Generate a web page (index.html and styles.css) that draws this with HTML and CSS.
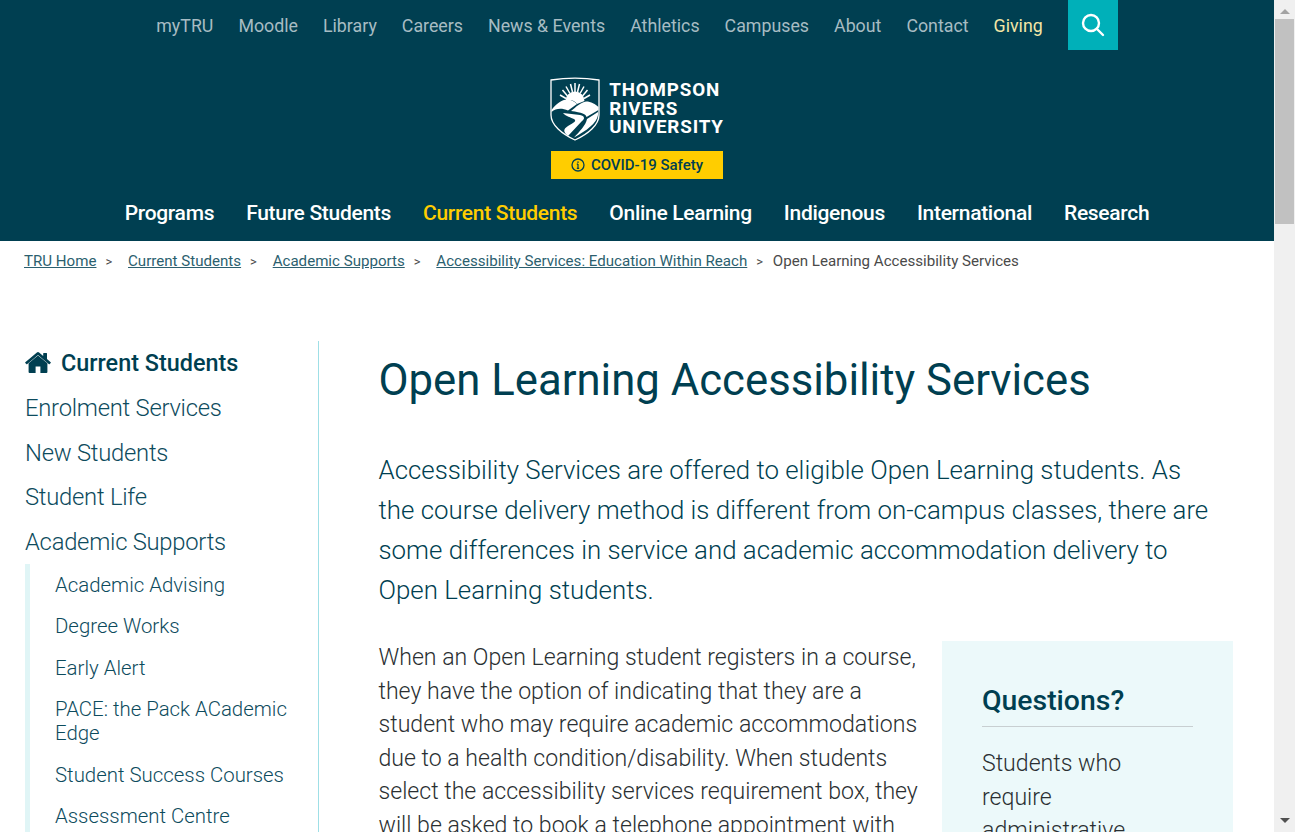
FILE: index.html
```html
<!DOCTYPE html>
<html lang="en">
<head>
<meta charset="UTF-8">
<meta name="viewport" content="width=device-width, initial-scale=1.0">
<title>Open Learning Accessibility Services</title>
<link rel="stylesheet" href="styles.css">
</head>
<body>
<div class="page">
    <header class="header">
        <nav class="top-nav">
            <a href="#">myTRU</a>
            <a href="#">Moodle</a>
            <a href="#">Library</a>
            <a href="#">Careers</a>
            <a href="#">News &amp; Events</a>
            <a href="#">Athletics</a>
            <a href="#">Campuses</a>
            <a href="#">About</a>
            <a href="#">Contact</a>
            <a href="#" class="giving">Giving</a>
            <a href="#" class="search-btn" aria-label="Search">
                <svg width="24" height="24" viewBox="0 0 24 24" fill="none" stroke="#fff" stroke-width="2.4" stroke-linecap="round"><circle cx="10" cy="10" r="8"/><path d="M16 16l6 6"/></svg>
            </a>
        </nav>
        <div class="logo">
            <svg class="shield" width="50" height="64" viewBox="0 0 50 64">
                <path d="M1 3C16 .6 34 .6 49 3V38C49 48 38 57 25 63C12 57 1 48 1 38Z" fill="none" stroke="#fff" stroke-width="1.300"/>
                <path d="M25 6v9M20.500 7l2 8M29.500 7l-2 8M16 9.500l4 7M34 9.500l-4 7M12.500 13l5 6M37.500 13l-5 6M10 18l6 3.500M40 18l-6 3.500" stroke="#fff" stroke-width="1.500"/>
                <path d="M15.500 24A9.500 9.500 0 0 1 34.500 24L27 27C24 23 20 22 15.500 24Z" fill="#fff"/>
                <path d="M1.500 33C6 27 12 22.500 17 22.500C21 22.500 24.500 24.500 27 27L18 33.500C12 31 6 31 1.500 35Z" fill="#fff"/>
                <path d="M21 34C26 30 31 25 36 24.500C41 24.500 45.500 27 48.500 30V33L36.500 40C36 37 32 35.500 21 34Z" fill="#fff"/>
                <path d="M13 36L30 38C35 39 35 42 32 44L18 59C13 55 13 52 18 49C24 45.500 27 44 24 42C21 40.500 16 39.500 13 36Z" fill="#fff"/>
                <path d="M37 42L48 35V38C47 46 36 54 24 60.500C29 55 36 48 37 42Z" fill="#fff"/>
            </svg>
            <div class="wordmark">THOMPSON<br>RIVERS<br>UNIVERSITY</div>
        </div>
        <a href="#" class="covid">
            <svg width="14" height="14" viewBox="0 0 14 14" fill="none" stroke="#003f51"><circle cx="7" cy="7" r="6" stroke-width="1.300"/><path d="M7 6v4.200M5.800 10.300h2.400M5.800 6.200H7" stroke-width="1.200"/><path d="M7 3.400v1.300" stroke-width="1.500"/></svg>
            COVID-19 Safety
        </a>
        <nav class="main-nav">
            <a href="#">Programs</a>
            <a href="#">Future Students</a>
            <a href="#" class="active">Current Students</a>
            <a href="#">Online Learning</a>
            <a href="#">Indigenous</a>
            <a href="#">International</a>
            <a href="#">Research</a>
        </nav>
    </header>

    <div class="breadcrumb">
        <a href="#">TRU Home</a><span class="sep">&gt;</span>
        <a href="#">Current Students</a><span class="sep">&gt;</span>
        <a href="#">Academic Supports</a><span class="sep">&gt;</span>
        <a href="#">Accessibility Services: Education Within Reach</a><span class="sep sep-last">&gt;</span>
        <span>Open Learning Accessibility Services</span>
    </div>

    <div class="layout">
        <aside class="sidebar">
            <a href="#" class="side-home">
                <svg width="26" height="22" viewBox="0 0 26 22" fill="#003f51"><path d="M13 3.400L3.600 11.200V20a1 1 0 0 0 1 1h6v-6.500h4.800V21h6a1 1 0 0 0 1-1v-8.800z"/><path d="M25.700 10.200L22 7.100V1.500a.5.5 0 0 0-.5-.5h-2.800a.5.5 0 0 0-.5.5v2.400L14.100.5a1.800 1.800 0 0 0-2.200 0L.3 10.200a.5.5 0 0 0 0 .7l1 1.200a.5.5 0 0 0 .7.100L13 3l11 9.200a.5.5 0 0 0 .7-.1l1-1.200a.5.5 0 0 0 0-.7z"/></svg>
                Current Students
            </a>
            <a href="#" class="side-link">Enrolment Services</a>
            <a href="#" class="side-link">New Students</a>
            <a href="#" class="side-link">Student Life</a>
            <a href="#" class="side-link">Academic Supports</a>
            <div class="side-sub">
                <a href="#">Academic Advising</a>
                <a href="#">Degree Works</a>
                <a href="#">Early Alert</a>
                <a href="#">PACE: the Pack ACademic Edge</a>
                <a href="#">Student Success Courses</a>
                <a href="#">Assessment Centre</a>
            </div>
        </aside>
        <main class="content">
            <h1>Open Learning Accessibility Services</h1>
            <p class="lead">Accessibility Services are offered to eligible Open Learning students. As the course delivery method is different from on-campus classes, there are some differences in service and academic accommodation delivery to Open Learning students.</p>
            <aside class="questions">
                <h2>Questions?</h2>
                <p>Students who require administrative support can contact us.</p>
            </aside>
            <p class="body-text">When an Open Learning student registers in a course, they have the option of indicating that they are a student who may require academic accommodations due to a health condition/disability. When students select the accessibility services requirement box, they will be asked to book a telephone appointment with an Accessibility Services advisor.</p>
        </main>
    </div>
</div>
<div class="scrollbar">
    <div class="arrow-up"></div>
    <div class="thumb"></div>
    <div class="arrow-down"></div>
</div>
</body>
</html>
```

FILE: styles.css
```css
* {
    box-sizing: border-box;
}
html, body {
    height: 100%;
    overflow: hidden;
}
body {
    display: flex;
    margin: 0;
    font-family: Roboto, "Liberation Sans", sans-serif;
    color: #003f51;
    background: #fff;
}
a {
    color: inherit;
    text-decoration: none;
}
.page {
    flex: 1;
    min-width: 0;
    height: 832px;
    overflow: hidden;
}

/* header */
.header {
    display: flex;
    flex-direction: column;
    align-items: center;
    height: 241px;
    background-color: #003f51;
}
.top-nav {
    display: flex;
    align-items: center;
    gap: 25px;
    height: 50px;
    font-size: 17.800px;
    color: #a7bcc3;
}
.top-nav .giving {
    color: #f3e6a6;
}
.search-btn {
    display: flex;
    align-items: center;
    justify-content: center;
    width: 50px;
    height: 50px;
    background-color: #00b0b9;
}
.logo {
    display: flex;
    align-items: center;
    gap: 9px;
    margin-top: 27px;
}
.wordmark {
    font-size: 18.800px;
    line-height: 18.500px;
    font-weight: 700;
    color: #fff;
    letter-spacing: .85px;
}
.covid {
    display: flex;
    align-items: center;
    justify-content: center;
    gap: 6px;
    width: 172px;
    height: 28px;
    margin-top: 10px;
    font-size: 15px;
    font-weight: 500;
    background-color: #ffcd00;
}
.main-nav {
    display: flex;
    gap: 32px;
    margin-top: 22px;
    font-size: 21px;
    font-weight: 500;
    letter-spacing: -.3px;
    color: #fff;
}
.main-nav .active {
    color: #ffcd00;
}

/* breadcrumb */
.breadcrumb {
    padding: 11px 24px 0;
    height: 100px;
    font-size: 15.100px;
    line-height: 18px;
    color: #4a4a4a;
}
.breadcrumb a {
    color: #2c5f6f;
    text-decoration: underline;
}
.sep {
    margin: 0 12px 0 9px;
    font-size: 13px;
}
.sep-last {
    margin-right: 6px;
}

/* sidebar and content */
.layout {
    display: flex;
}
.sidebar {
    flex: 0 0 319px;
    padding: 0 0 0 25px;
    border-right: 1px solid #9fdfe6;
}
.side-home {
    display: flex;
    align-items: center;
    gap: 10px;
    height: 44px;
    font-size: 23.400px;
    font-weight: 500;
}
.side-link {
    display: block;
    padding-top: 8px;
    height: 44.500px;
    font-size: 23.800px;
    line-height: 30px;
    font-weight: 300;
    letter-spacing: -.25px;
    color: #0d4b5d;
}
.side-sub {
    padding: 9px 20px 40px 25px;
    margin-top: 1px;
    border-left: 5px solid #e0f5f6;
    font-size: 20.400px;
    font-weight: 300;
    color: #0d4b5d;
}
.side-sub a {
    display: block;
    line-height: 24px;
    margin-bottom: 17.450px;
}
.content {
    flex: 1;
    min-width: 0;
    padding: 0 41px 0 59.500px;
}
h1 {
    margin: 13px 0 0;
    font-size: 43.700px;
    line-height: 52px;
    font-weight: 400;
}
.lead {
    max-width: 835px;
    margin: 44px 0 0;
    font-size: 25.850px;
    line-height: 40px;
    font-weight: 300;
    color: #003f51;
}
.questions {
    float: right;
    width: 291px;
    margin: 31px 0 0 20px;
    padding: 40px;
    height: 300px;
    background-color: #ecf9fa;
}
.questions h2 {
    margin: 2px 0 0;
    padding-bottom: 7px;
    font-size: 28.400px;
    line-height: 36px;
    font-weight: 500;
    border-bottom: 1px solid #c8cfd1;
}
.questions p {
    margin: 20px 0 0;
    font-size: 23.100px;
    line-height: 33.500px;
    font-weight: 300;
    color: #2a2f32;
}
.body-text {
    margin: 31px 0 0;
    font-size: 23.100px;
    line-height: 33.500px;
    font-weight: 300;
    color: #2a2f32;
}

/* drawn scrollbar */
.scrollbar {
    display: flex;
    flex-direction: column;
    align-items: center;
    flex: 0 0 21px;
    height: 832px;
    background-color: #f0f0f0;
}
.arrow-up {
    width: 0;
    height: 0;
    margin: 9px 0 5px;
    border: 5px solid transparent;
    border-top: 0;
    border-bottom-color: #a3a3a3;
}
.thumb {
    width: 19px;
    height: 205px;
    background-color: #c1c1c1;
}
.arrow-down {
    width: 0;
    height: 0;
    margin-top: auto;
    margin-bottom: 9px;
    border: 5px solid transparent;
    border-bottom: 0;
    border-top-color: #505050;
}
```
